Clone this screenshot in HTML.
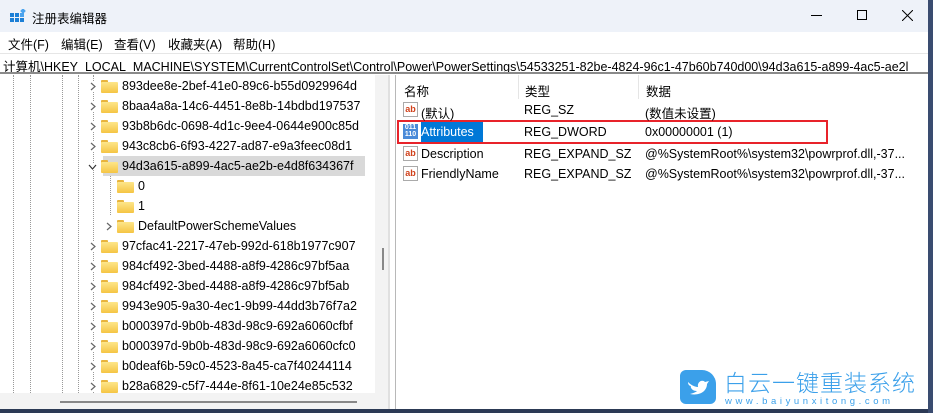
<!DOCTYPE html>
<html><head><meta charset="utf-8"><style>
*{margin:0;padding:0;box-sizing:border-box}
body{width:933px;height:413px;overflow:hidden;background:#fff;font-family:"Liberation Sans","Noto Sans CJK SC",sans-serif;font-size:12.5px;color:#000;position:relative}
.abs{position:absolute}
.title{left:0;top:0;width:933px;height:32px;background:#eef2f9}
.menu{left:0;top:32px;width:933px;height:20px;background:#fff}
.menu span{position:absolute;top:2px;font-size:12.5px}
.addr{left:0;top:53px;width:933px;height:21px;background:#fff;border-top:1px solid #e6e6e6;border-bottom:2px solid #8a8a8a;font-size:12.5px;padding:2px 0 0 3px;white-space:nowrap;overflow:hidden}
.tree{left:0;top:75px;width:390px;height:336px;background:#fff}
.row{position:absolute;height:20px;white-space:nowrap;font-size:12.5px;line-height:20px}
.fold{position:absolute;width:17px;height:13px}
.fold:before{content:"";position:absolute;left:0;top:0;width:7px;height:3px;background:#e8b43c;border-radius:1px 1px 0 0}
.fold:after{content:"";position:absolute;left:0;top:2px;width:17px;height:11px;background:linear-gradient(#fde58a,#f5c443);border-radius:1px}
.vd{position:absolute;width:0;border-left:1px dotted #999}
.right{left:395px;top:75px;width:538px;height:336px;border-left:1px solid #b8b8b8}
.icon{position:absolute;width:15px;height:15px;border:1px solid #aaa;background:#fff;font-size:9px;font-weight:bold;color:#d0401a;line-height:12px;text-align:center}
</style></head><body>
<div class="abs title">
 <svg class="abs" style="left:10px;top:9px" width="16" height="15"><g fill="#1c7fd6"><rect x="0" y="4" width="4" height="4"/><rect x="5" y="4" width="4" height="4"/><rect x="0" y="9" width="4" height="4"/><rect x="5" y="9" width="4" height="4"/><rect x="10" y="9" width="4" height="4"/><rect x="10" y="4" width="4" height="4" fill="#4aa3ee"/><rect x="11" y="0" width="4" height="4" transform="rotate(45 13 2)" fill="#4aa3ee"/></g></svg>
 <span class="abs" style="left:32px;top:8px;font-size:12.5px">注册表编辑器</span>
 <div class="abs" style="left:811px;top:15px;width:11px;height:1px;background:#000"></div>
 <div class="abs" style="left:857px;top:10px;width:10px;height:10px;border:1px solid #000"></div>
 <svg class="abs" style="left:902px;top:10px" width="11" height="11"><path d="M0 0L11 11M11 0L0 11" stroke="#000" stroke-width="1"/></svg>
</div>
<div class="abs menu"><span style="left:8px">文件(F)</span><span style="left:61px">编辑(E)</span><span style="left:114px">查看(V)</span><span style="left:168px">收藏夹(A)</span><span style="left:233px">帮助(H)</span></div>
<div class="abs addr">计算机\HKEY_LOCAL_MACHINE\SYSTEM\CurrentControlSet\Control\Power\PowerSettings\54533251-82be-4824-96c1-47b60b740d00\94d3a615-a899-4ac5-ae2l</div>
<div class="abs tree">
 <div class="vd" style="left:13px;top:0;height:318px"></div>
 <div class="vd" style="left:30px;top:0;height:318px"></div>
 <div class="vd" style="left:62px;top:0;height:318px"></div>
 <div class="vd" style="left:78px;top:0;height:318px"></div>
 <div class="vd" style="left:93px;top:0;height:318px"></div>
 <div class="vd" style="left:110px;top:100px;height:40px"></div>
 <div class="abs" style="left:103px;top:81px;width:262px;height:20px;background:#d9d9d9"></div>
 <div class="abs" style="left:375px;top:0;width:15px;height:318px;background:#f3f3f3"></div>
 <div class="abs" style="left:382px;top:173px;width:2px;height:22px;background:#888"></div>
 <div class="abs" style="left:0;top:318px;width:390px;height:18px;background:#f3f3f3"></div>
 <div class="abs" style="left:60px;top:326px;width:297px;height:2px;background:#888"></div>
 <div class="abs" style="left:388px;top:0;width:2px;height:336px;background:#e0e0e0"></div>
</div>
<div id="rows"></div>
<div class="abs right">
 <div class="abs" style="left:8px;top:6px">名称</div>
 <div class="abs" style="left:122px;top:0;width:1px;height:24px;background:#e5e5e5"></div>
 <div class="abs" style="left:129px;top:6px">类型</div>
 <div class="abs" style="left:242px;top:0;width:1px;height:24px;background:#e5e5e5"></div>
 <div class="abs" style="left:250px;top:6px">数据</div>
 <div class="abs" style="left:25px;top:47px;width:62px;height:20px;background:#0078d7"></div>
 <div class="abs" style="left:1px;top:45px;width:431px;height:24px;border:2px solid #e8232a"></div>
</div>
<div class="abs" style="left:403px;top:102px" ><div class="icon" style="position:relative">ab</div></div>
<div class="abs" style="left:403px;top:124px;width:15px;height:15px;background:#4a8ad8;color:#fff;font-size:7px;line-height:7px;text-align:center;font-weight:bold">011<br>110</div>
<div class="abs" style="left:403px;top:146px"><div class="icon" style="position:relative">ab</div></div>
<div class="abs" style="left:403px;top:166px"><div class="icon" style="position:relative">ab</div></div>
<div class="abs" style="left:421px;top:103px">(默认)</div><div class="abs" style="left:524px;top:103px">REG_SZ</div><div class="abs" style="left:645px;top:103px">(数值未设置)</div>
<div class="abs" style="left:421px;top:125px;color:#fff">Attributes</div><div class="abs" style="left:524px;top:125px">REG_DWORD</div><div class="abs" style="left:645px;top:125px">0x00000001 (1)</div>
<div class="abs" style="left:421px;top:147px">Description</div><div class="abs" style="left:524px;top:147px">REG_EXPAND_SZ</div><div class="abs" style="left:645px;top:147px">@%SystemRoot%\system32\powrprof.dll,-37...</div>
<div class="abs" style="left:421px;top:167px">FriendlyName</div><div class="abs" style="left:524px;top:167px">REG_EXPAND_SZ</div><div class="abs" style="left:645px;top:167px">@%SystemRoot%\system32\powrprof.dll,-37...</div>
<!-- watermark -->
<div class="abs" style="left:680px;top:370px;width:36px;height:34px;background:#3ba0ea;border-radius:6px 14px 6px 6px"></div>
<svg class="abs" style="left:686px;top:376px" width="24" height="22"><path d="M2 6C6 10 10 11 12 11C11 6 16 3 19 6L23 5L21 8C21 15 14 20 4 18C8 17 10 16 11 15C6 15 4 11 5 10C3 10 2 8 2 6Z" fill="#fff"/></svg>
<div class="abs" style="left:724px;top:368px;font-size:23px;color:#3ba0ea;white-space:nowrap;letter-spacing:1px;font-family:'Noto Sans CJK SC',sans-serif;font-weight:300;line-height:26px">白云一键重装系统</div>
<div class="abs" style="left:725px;top:396px;font-size:9.5px;color:#3ba0ea;white-space:nowrap;letter-spacing:3.6px;line-height:11px">www.baiyunxitong.com</div>
<div class="abs" style="left:0;top:409px;width:933px;height:4px;background:#2c3a55"></div>
<div class="abs" style="left:928px;top:0;width:5px;height:413px;background:#3a4c70"></div>
<script>
var r=[["893dee8e-2bef-41e0-89c6-b55d0929964d",1],["8baa4a8a-14c6-4451-8e8b-14bdbd197537",1],["93b8b6dc-0698-4d1c-9ee4-0644e900c85d",1],["943c8cb6-6f93-4227-ad87-e9a3feec08d1",1],["94d3a615-a899-4ac5-ae2b-e4d8f634367f",2],["0",0],["1",0],["DefaultPowerSchemeValues",3],["97cfac41-2217-47eb-992d-618b1977c907",1],["984cf492-3bed-4488-a8f9-4286c97bf5aa",1],["984cf492-3bed-4488-a8f9-4286c97bf5ab",1],["9943e905-9a30-4ec1-9b99-44dd3b76f7a2",1],["b000397d-9b0b-483d-98c9-692a6060cfbf",1],["b000397d-9b0b-483d-98c9-692a6060cfc0",1],["b0deaf6b-59c0-4523-8a45-ca7f40244114",1],["b28a6829-c5f7-444e-8f61-10e24e85c532",1]];
var h="";r.forEach(function(a,i){var y=76+i*20,sub=(a[1]==0||a[1]==3),fx=sub?117:101;
if(a[1]==1)h+='<svg class="abs" style="left:90px;top:'+(y+6)+'px;background:#fff" width="6" height="9"><path d="M1 1L5 4.5L1 8" stroke="#666" fill="none" stroke-width="1.2"/></svg>';
if(a[1]==2)h+='<svg class="abs" style="left:88px;top:'+(y+8)+'px;background:#fff" width="9" height="6"><path d="M1 1L4.5 5L8 1" stroke="#333" fill="none" stroke-width="1.2"/></svg>';
if(a[1]==3)h+='<svg class="abs" style="left:106px;top:'+(y+6)+'px;background:#fff" width="6" height="9"><path d="M1 1L5 4.5L1 8" stroke="#666" fill="none" stroke-width="1.2"/></svg>';
h+='<div class="fold" style="left:'+fx+'px;top:'+(y+4)+'px"></div><div class="row" style="left:'+(fx+21)+'px;top:'+y+'px">'+a[0]+'</div>';});
document.getElementById("rows").innerHTML=h;
</script>
</body></html>
